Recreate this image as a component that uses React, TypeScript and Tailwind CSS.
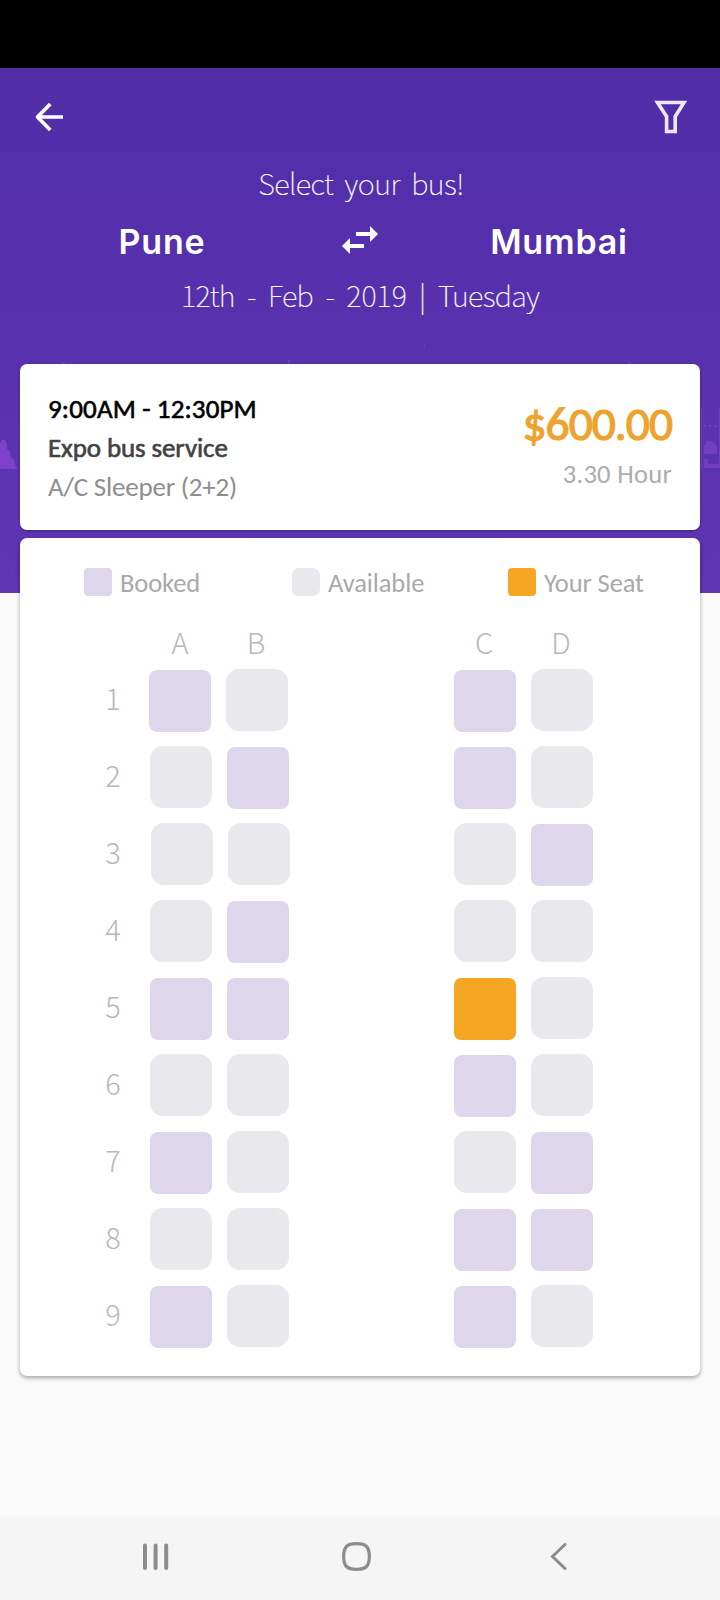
import type { ReactNode } from "react";

type Seat = "b" | "a" | "y";

const rows: Seat[][] = [
  ["b", "a", "b", "a"],
  ["a", "b", "b", "a"],
  ["a", "a", "a", "b"],
  ["a", "b", "a", "a"],
  ["b", "b", "y", "a"],
  ["a", "a", "b", "a"],
  ["b", "a", "a", "b"],
  ["a", "a", "b", "b"],
  ["b", "a", "b", "a"],
];

const seatStyle: Record<Seat, string> = {
  b: "mt-px rounded-[8px] bg-[#ded7ec]",
  a: "rounded-[13px] bg-[#e9e8ed]",
  y: "mt-px rounded-[7px] bg-[#f5a623]",
};

const thin = "font-['Noto_Sans_CJK_JP','Noto_Sans',sans-serif] font-thin text-[29px] [-webkit-text-stroke:0.2px_#fff]";
const label = "font-['Noto_Sans_CJK_JP','Noto_Sans',sans-serif] font-light text-[29px] text-[#b8b8b8]";

function SeatBox({ kind }: { kind: Seat }) {
  return <div className={`h-[62px] w-[62px] shrink-0 ${seatStyle[kind]}`} />;
}

function Legend({ swatch, className, children }: { swatch: string; className: string; children: ReactNode }) {
  return (
    <div className={`flex h-7 items-center text-[26.5px] leading-7 text-[#a9a9a9] ${className}`}>
      <div className={`h-7 w-7 shrink-0 ${swatch}`} />
      <span className="ml-2 pt-[2px] tracking-[-0.1px] whitespace-nowrap">{children}</span>
    </div>
  );
}

function Backdrop() {
  return (
    <div className="absolute inset-x-0 top-[68px] h-[525px] bg-linear-to-b from-[#512da8] to-[#5f35b3]">
      <svg width="720" height="525" viewBox="0 0 720 525" fill="#7d42cb">
        <path d="M0 376l2-4h3l2 4v5l3 2 1 6 3 3 1 5 2 3v1H0z" />
        <g opacity=".7">
          <path d="M701 341h1v60h-1zM719 341h1v60h-1zM704 357h2v2h-2zM709 357h2v2h-2zM714 357h3v2h-3z" />
          <path d="M704 386v-8l3-5h6l4 5v8zM704 400v-9h4v5h12v4z" />
        </g>
        <path opacity=".6" d="M62 294h3v2h-3zM288 292h2v4h-2zM424 277h1v3h-1zM197 278h1v2h-1zM628 294h3v2h-3z" />
      </svg>
    </div>
  );
}

export default function App() {
  return (
    <div className="relative flex h-[1600px] w-[720px] flex-col overflow-hidden bg-[#fafafa] font-['Carlito','Lato',sans-serif]">
      <Backdrop />
      <div className="h-[68px] shrink-0 bg-black" />
      <header className="relative flex h-[296px] shrink-0 flex-col text-white">
        <div className="flex h-[98px] items-center justify-between pr-[31px] pl-[33px]">
          <svg width="32" height="32" viewBox="0 0 32 32" fill="none" stroke="#fff" strokeWidth="3.700">
            <path d="M30 16H5M17.300 3L4.500 16l12.800 13" strokeLinejoin="round" />
          </svg>
          <svg width="36" height="36" viewBox="0 0 36 36" fill="none" stroke="#efe8fb" strokeWidth="3.600">
            <path d="M4.500 3.500h26.500L22.200 17.500v15h-8.600v-15z" />
          </svg>
        </div>
        <p className={`pl-[2px] text-center leading-8 tracking-[-0.5px] [word-spacing:5.500px] ${thin}`}>Select your bus!</p>
        <div className="mt-[23px] flex h-10 items-center font-['Inter','Lato',sans-serif] text-[34px] leading-10 font-semibold">
          <span className="w-[324px] pt-[2px] text-center tracking-[0.800px]">Pune</span>
          <svg className="mx-4 mb-[3px]" width="40" height="30" viewBox="0 0 40 30" fill="#fff">
            <path d="M16 7h14V1l8 8-8 8v-6H16zM24 19H10v-6l-8 8 8 8v-6h14z" />
          </svg>
          <span className="w-[324px] pt-[2px] pl-[2px] text-center tracking-[0.800px]">Mumbai</span>
        </div>
        <p className={`mt-[13px] text-center leading-10 tracking-[-0.7px] [word-spacing:6.600px] ${thin}`}>
          12th - Feb - <span className="tracking-normal">2019</span> | Tuesday
        </p>
      </header>

      <section className="relative mx-5 flex h-[166px] shrink-0 justify-between rounded-[7px] bg-white pt-[25px] pr-7 pl-7 shadow-[0_1px_3px_rgba(0,0,0,0.3)]">
        <div className="flex flex-col text-[27px] leading-[39px] whitespace-nowrap">
          <span className="tracking-[0.150px] text-black [-webkit-text-stroke:0.6px_#000]">9:00AM - 12:30PM</span>
          <span className="tracking-[-0.100px] text-[#424242] [-webkit-text-stroke:0.6px_#424242]">Expo bus service</span>
          <span className="tracking-[-0.200px] text-[#8d8d8d]">A/C Sleeper (2+2)</span>
        </div>
        <div className="flex flex-col items-end whitespace-nowrap">
          <span className="mt-[11px] text-[47.500px] leading-[48px] tracking-[-1px] text-[#eda42e] [-webkit-text-stroke:1.2px_#eda42e]">$600.00</span>
          <span className="mt-[7px] text-[26.5px] leading-[39px] tracking-[0.300px] text-[#adadad]">3.30 Hour</span>
        </div>
      </section>

      <section className="relative mx-5 mt-2 flex h-[838px] shrink-0 flex-col rounded-[7px] bg-white pt-[30px] shadow-[0_2px_4px_rgba(0,0,0,0.35)]">
        <div className="flex">
          <Legend className="ml-16 w-[208px]" swatch="rounded-[4px] bg-[#ded7ec]">Booked</Legend>
          <Legend className="w-[216px]" swatch="rounded-[7px] bg-[#e9e8ed]">Available</Legend>
          <Legend className="" swatch="rounded-[4px] bg-[#f5a623]">Your Seat</Legend>
        </div>
        <div className={`mt-5 mb-[3px] flex h-[50px] pl-[129px] leading-[50px] ${label}`}>
          <span className="w-[62px] text-center">A</span>
          <span className="ml-[14px] w-[62px] text-center">B</span>
          <span className="ml-[166px] w-[62px] text-center">C</span>
          <span className="ml-[15px] w-[62px] text-center">D</span>
        </div>
        {rows.map((seats, i) => (
          <div key={i} className="flex h-[77px] shrink-0 pl-[62px]">
            <span className={`w-[62px] text-center leading-[57px] ${label}`}>{i + 1}</span>
            <div className={`flex w-[310px] gap-[15px] ${i === 0 ? "pl-[5px]" : i === 2 ? "pl-[7px]" : "pl-[6px]"}`}>
              <SeatBox kind={seats[0]} />
              <SeatBox kind={seats[1]} />
            </div>
            <div className="flex gap-[15px]">
              <SeatBox kind={seats[2]} />
              <SeatBox kind={seats[3]} />
            </div>
          </div>
        ))}
      </section>

      <nav className="mt-auto h-[84px] shrink-0 bg-[#f5f5f5]">
        <svg width="720" height="84" viewBox="0 0 720 84" fill="none" stroke="#8c8c8c">
          <path d="M145 29.500v22.500M155.600 29.500v22.500M166.200 29.500v22.500" strokeWidth="4" strokeLinecap="round" />
          <path d="M356.500 27.700c9.600 0 12.800 3.200 12.800 12.800s-3.200 12.800-12.800 12.800-12.800-3.200-12.800-12.800 3.200-12.800 12.800-12.800z" strokeWidth="3.200" />
          <path d="M565 28.500L552.500 40.500 565 52.500" strokeWidth="3" strokeLinecap="round" />
        </svg>
      </nav>
    </div>
  );
}
